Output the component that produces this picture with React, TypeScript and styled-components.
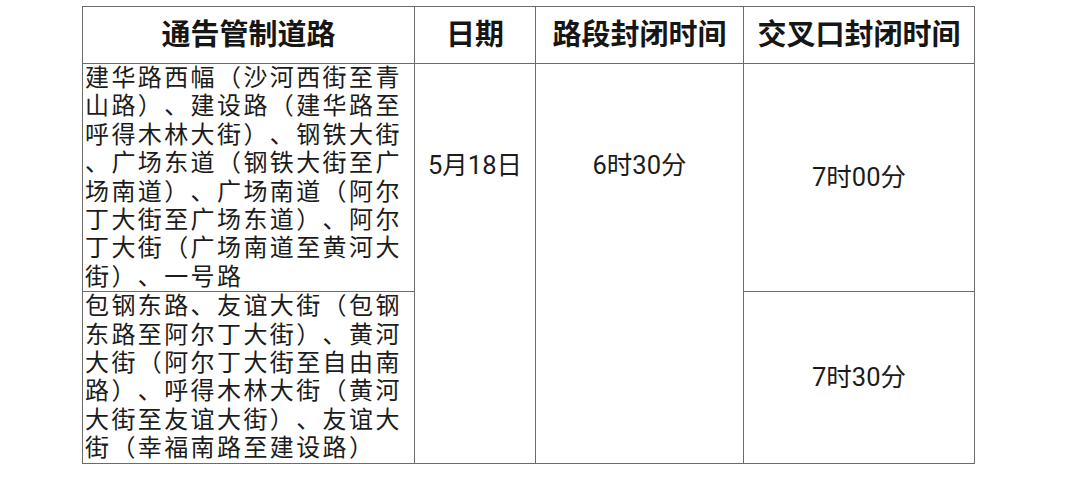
import React from 'react'
import styled, { createGlobalStyle } from 'styled-components'

const GlobalStyle = createGlobalStyle`
  html, body {
    margin: 0;
    padding: 0;
    background: #ffffff;
  }
  body {
    font-family: Roboto, "Noto Sans CJK SC", "Noto Sans", sans-serif;
    color: #1c1c1c;
    text-spacing-trim: space-all;
  }
`

const Page = styled.div`
  padding: 6px 0 0 82px;
  width: 1080px;
  height: 479px;
  box-sizing: border-box;
`

const Table = styled.table`
  width: 892px;
  table-layout: fixed;
  border-collapse: collapse;
  border: 1px solid #6b6b6b;
`

const HeadCell = styled.th`
  height: 56px;
  padding: 0;
  border: 1px solid #6b6b6b;
  font-size: 29px;
  font-weight: 700;
  line-height: 56px;
  text-align: center;
  vertical-align: middle;
  white-space: nowrap;
  color: #161616;
`

const RoadCell = styled.td`
  padding: 0 1px 0 2px;
  border: 1px solid #6b6b6b;
  font-size: 24px;
  line-height: 28.4px;
  letter-spacing: 2.4px;
  text-align: left;
  vertical-align: top;
  word-break: break-all;
  line-break: anywhere;
  text-spacing-trim: space-all;
`

const ValueCell = styled.td<{ $top?: number }>`
  padding: ${({ $top }) => ($top ? `${$top}px 0 0` : '0')};
  border: 1px solid #6b6b6b;
  font-size: 25.5px;
  line-height: 28.4px;
  text-align: center;
  vertical-align: ${({ $top }) => ($top ? 'top' : 'middle')};
  white-space: nowrap;
`

const columns = [332, 121, 208, 231]

const headers = ['通告管制道路', '日期', '路段封闭时间', '交叉口封闭时间']

const sections = [
  {
    roads:
      '建华路西幅（沙河西街至青山路）、建设路（建华路至呼得木林大街）、钢铁大街、广场东道（钢铁大街至广场南道）、广场南道（阿尔丁大街至广场东道）、阿尔丁大街（广场南道至黄河大街）、一号路',
    crossing: '7时00分',
  },
  {
    roads:
      '包钢东路、友谊大街（包钢东路至阿尔丁大街）、黄河大街（阿尔丁大街至自由南路）、呼得木林大街（黄河大街至友谊大街）、友谊大街（幸福南路至建设路）',
    crossing: '7时30分',
  },
]

export default function App() {
  return (
    <>
      <GlobalStyle />
      <Page>
        <Table>
          <colgroup>
            {columns.map((w, i) => (
              <col key={i} style={{ width: w }} />
            ))}
          </colgroup>
          <thead>
            <tr>
              {headers.map((h) => (
                <HeadCell key={h}>{h}</HeadCell>
              ))}
            </tr>
          </thead>
          <tbody>
            {sections.map((s, i) => (
              <tr key={i}>
                <RoadCell>{s.roads}</RoadCell>
                {i === 0 && (
                  <>
                    <ValueCell rowSpan={2} $top={87}>5月18日</ValueCell>
                    <ValueCell rowSpan={2} $top={87}>6时30分</ValueCell>
                  </>
                )}
                <ValueCell>{s.crossing}</ValueCell>
              </tr>
            ))}
          </tbody>
        </Table>
      </Page>
    </>
  )
}
